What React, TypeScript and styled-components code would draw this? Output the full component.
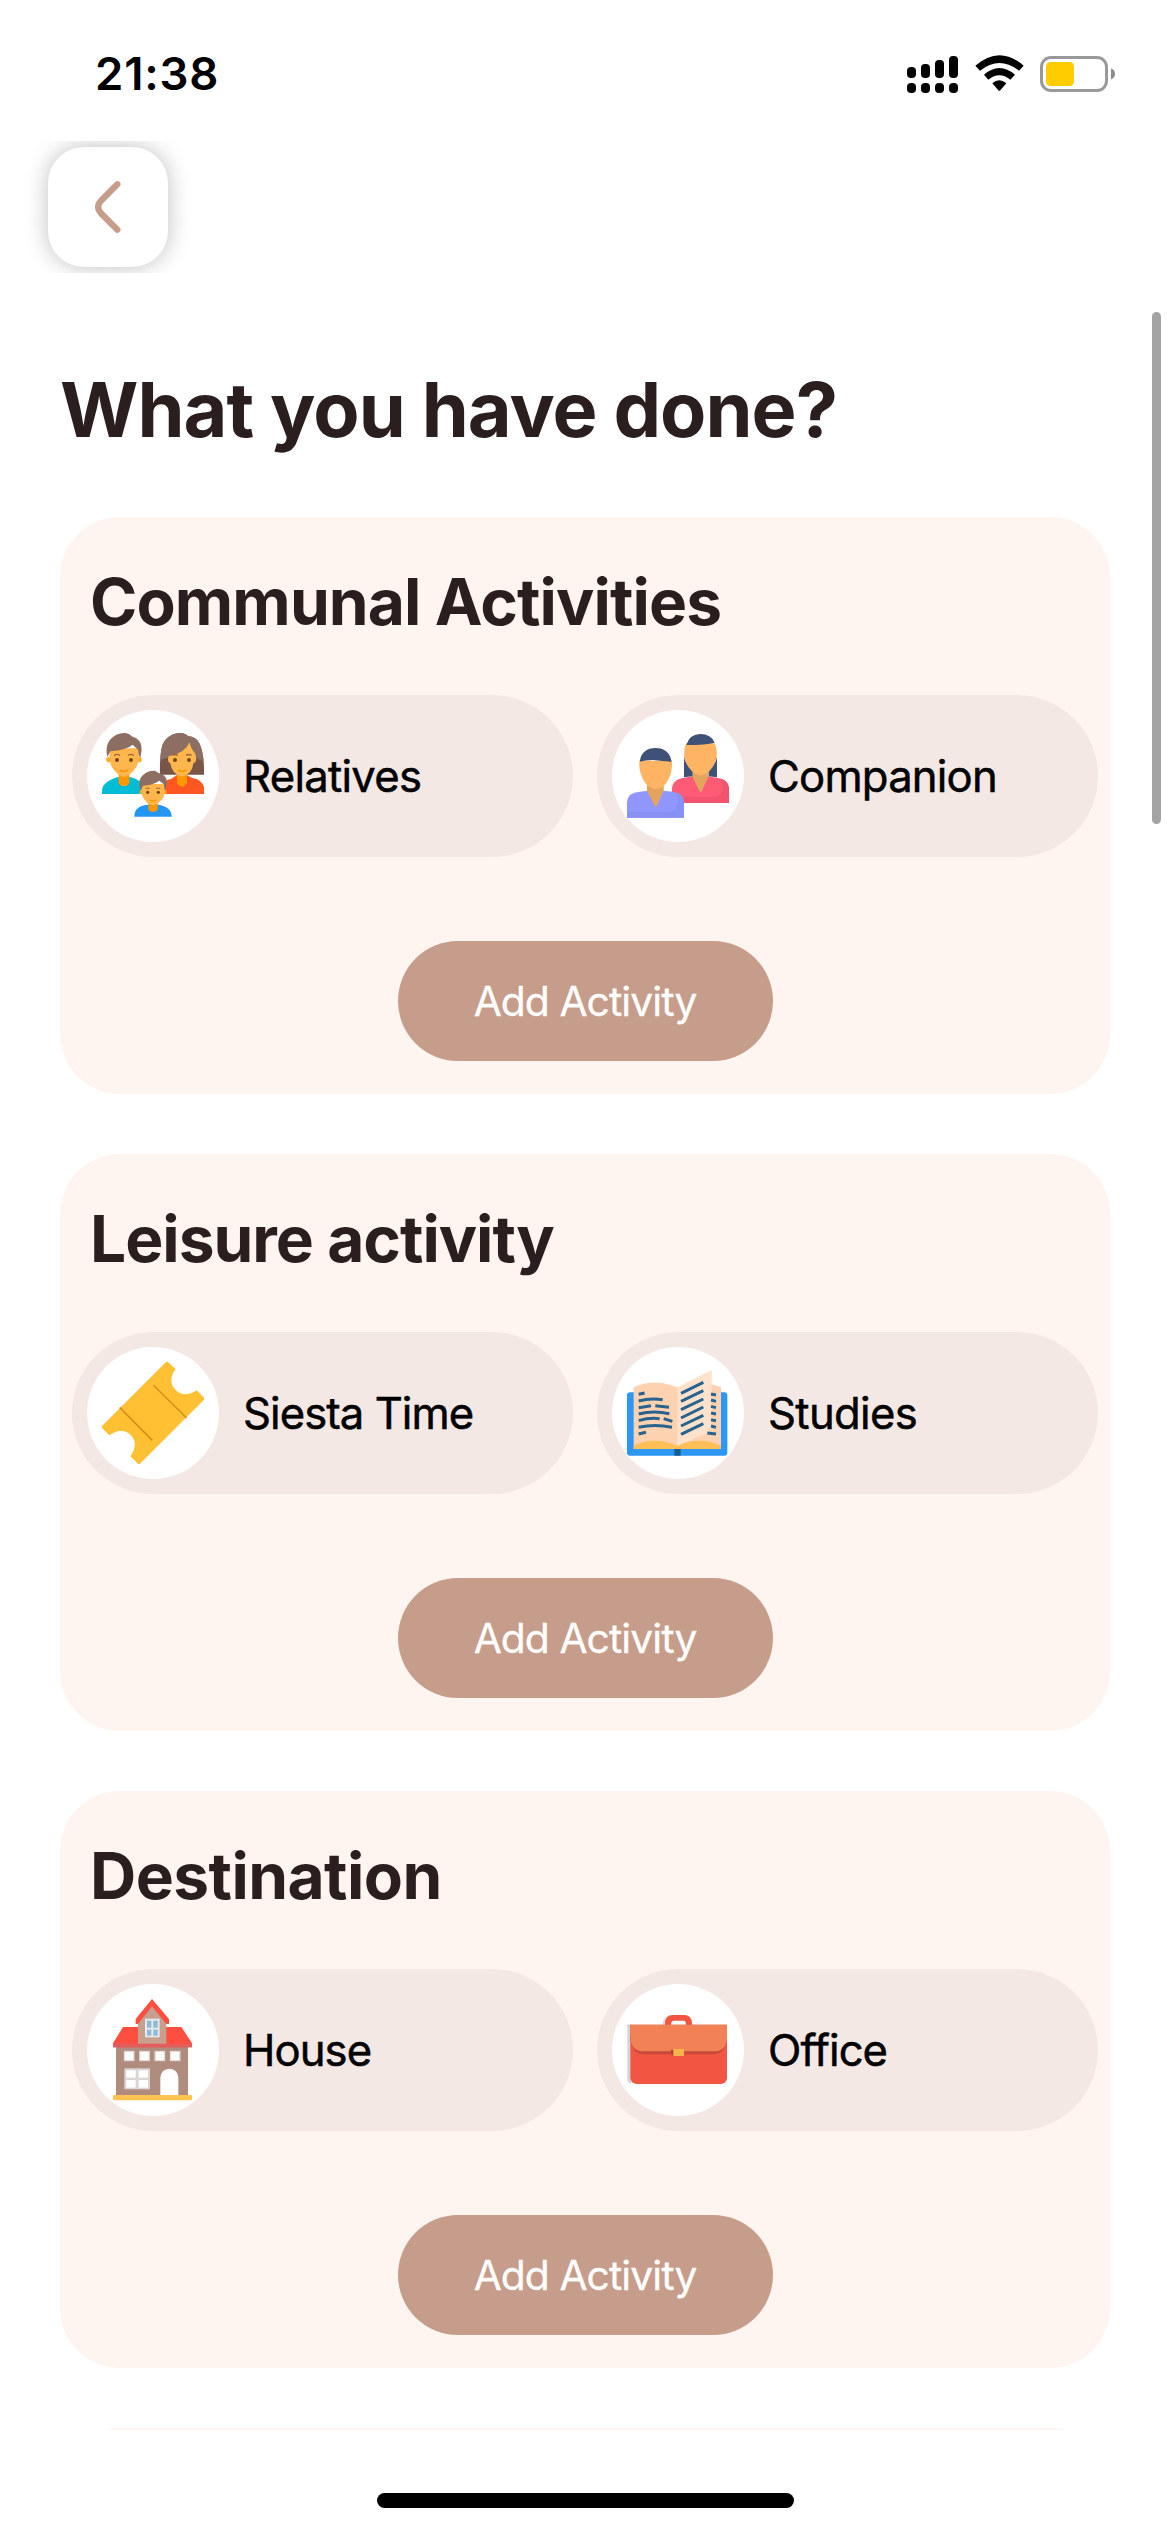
import React from "react";
import styled, { createGlobalStyle } from "styled-components";

const GlobalStyle = createGlobalStyle`
  *, *::before, *::after { box-sizing: border-box; }
  html, body { margin: 0; background: #fff; }
  body { font-family: Inter, "Liberation Sans", sans-serif; -webkit-font-smoothing: antialiased; }
  h1, h2 { margin: 0; }
  button { border: 0; padding: 0; font: inherit; }
`;

const Screen = styled.div`
  position: relative;
  display: flex;
  flex-direction: column;
  width: 1170px;
  height: 2532px;
  overflow: hidden;
  background: #fff;
`;

const StatusBar = styled.header`
  display: flex;
  align-items: center;
  justify-content: space-between;
  height: 141px;
  padding: 7px 54px 0 95px;
`;

const Clock = styled.time`
  color: #000;
  font-size: 45.5px;
  font-weight: 600;
  line-height: 56px;
  letter-spacing: 0.8px;
`;

const StatusIcons = styled.div`
  display: flex;
  align-items: center;
  gap: 16px;
`;

const NavBar = styled.nav`
  height: 132px;
  padding: 6px 48px;
  overflow: hidden;
`;

const BackButton = styled.button`
  display: flex;
  align-items: center;
  justify-content: center;
  width: 120px;
  height: 120px;
  border-radius: 36px;
  background: #fff;
  box-shadow: 0 0 23px rgba(0, 0, 0, 0.25);
`;

const Scroller = styled.main`
  height: 2157px;
  padding: 90px 60px 0;
  overflow: hidden;
`;

const PageTitle = styled.h1`
  margin-bottom: 61px;
  color: #2a1f1e;
  font-size: 75.6px;
  font-weight: 700;
  line-height: 93px;
  letter-spacing: -0.97px;
  white-space: nowrap;
`;

const CardList = styled.div`
  display: flex;
  flex-direction: column;
  gap: 60px;
`;

const Card = styled.section`
  display: flex;
  flex-direction: column;
  align-items: center;
  flex: none;
  height: 577px;
  padding: 46px 12px 33px;
  border-radius: 60px;
  background: #fff5f0;
`;

const CardTitle = styled.h2<{ $track: number }>`
  align-self: stretch;
  padding-left: 18px;
  color: #2a1f1e;
  font-size: 64px;
  font-weight: 700;
  line-height: 78px;
  letter-spacing: ${(p) => p.$track}px;
  white-space: nowrap;
`;

const Options = styled.div`
  display: grid;
  grid-template-columns: 1fr 1fr;
  gap: 24px;
  align-self: stretch;
  margin: 54px 0 84px;
`;

const Option = styled.div`
  display: flex;
  align-items: center;
  gap: 24px;
  height: 162px;
  padding: 15px;
  border-radius: 81px;
  background: #f3e8e4;
`;

const IconDisc = styled.div`
  flex: none;
  width: 132px;
  height: 132px;
  padding: 15px;
  border-radius: 50%;
  background: #fff;

  svg {
    display: block;
    width: 102px;
    height: 102px;
  }
`;

const OptionLabel = styled.span<{ $track: number }>`
  color: #000;
  font-size: 43.6px;
  font-weight: 400;
  letter-spacing: ${(p) => p.$track}px;
  white-space: nowrap;
  -webkit-text-stroke: 0.5px currentColor;
`;

const AddButton = styled.button`
  width: 375px;
  height: 120px;
  border-radius: 60px;
  background: #c69c8a;
  color: #fff;
  font-size: 40.8px;
  letter-spacing: -0.95px;
  -webkit-text-stroke: 0.3px currentColor;
`;

const ScrollThumb = styled.div`
  position: absolute;
  top: 312px;
  right: 9px;
  width: 9px;
  height: 512px;
  border-radius: 5px;
  background: #a4a4a4;
`;

const HomeArea = styled.footer`
  display: flex;
  justify-content: center;
  padding-top: 63px;
`;

const HomeIndicator = styled.div`
  width: 417px;
  height: 15px;
  border-radius: 8px;
  background: #000;
`;

const SignalIcon = () => (
  <svg width="52" height="38" viewBox="0 -1 52 38">
    {[11, 8, 4, 0].map((y, i) => (
      <g key={y}>
        <rect x={i * 14} y={y} width="9" height={22 - y} rx="4" />
        <rect x={i * 14} y="27" width="9" height="10" rx="4" />
      </g>
    ))}
  </svg>
);

const WifiIcon = () => (
  <svg width="49" height="38" viewBox="344 105 147 114">
    <path d="M345 137 Q417 74 490 137 L476 152 Q417 106 359 152 Z" />
    <path d="M371 164 Q417 124 464 164 L450 179 Q417 153 384 179 Z" />
    <path d="M396 190 Q417 172 438 190 L420 211 Q417 214 414 211 Z" />
  </svg>
);

const BatteryIcon = () => (
  <svg width="76" height="36" viewBox="0 0 76 36">
    <rect x="1.5" y="1.5" width="65" height="33" rx="9.5" fill="none" stroke="#999" strokeWidth="3" />
    <rect x="6" y="6" width="28" height="24" rx="4.5" fill="#fc0" />
    <path d="M71 12.6 Q75 14 75 18 Q75 22 71 23.4 Z" fill="#8c8c8c" />
  </svg>
);

const BackIcon = () => (
  <svg width="120" height="120" viewBox="144 441 360 360">
    <path d="M352 553 L303 602 Q286 621 303 640 L352 689" fill="none" stroke="#c69c8a" strokeWidth="19" strokeLinecap="round" />
  </svg>
);

const FamilyIcon = () => (
  <svg viewBox="126 135 306 306">
    <path d="M300 284 Q298 205 313 184 Q334 157 366 159 Q378 161 385 169 Q408 170 418 190 Q433 219 432 284 Z" fill="#795548" />
    <path d="M302 240 Q300 158 366 159 Q378 161 385 169 Q408 170 418 190 Q428 212 431 245 L405 232 L326 232 Z" fill="#8d6e63" />
    <path d="M300 342 Q303 301 333 297 L350 286 L381 286 L397 294 Q425 298 432 322 V342 Z" fill="#ff5722" />
    <path d="M351 276 H381 V310 Q366 330 351 310 Z" fill="#ff9800" />
    <path d="M326 229 Q375 220 389 187 Q392 206 405 220 Q414 246 400 250 Q397 283 366 290 Q336 284 331 250 Q320 246 326 229 Z" fill="#ffb74d" />
    <path d="M126 342 V329 Q130 303 174 291 H211 Q244 300 258 324 V342 Z" fill="#00bcd4" />
    <path d="M176 276 H208 V311 Q192 327 176 311 Z" fill="#ff9800" />
    <circle cx="147" cy="239" r="8" fill="#ffa726" />
    <circle cx="237" cy="239" r="8" fill="#ffa726" />
    <path d="M149 205 H236 Q240 252 224 268 Q208 289 192 291 Q175 288 160 268 Q145 250 149 205 Z" fill="#ffb74d" />
    <path d="M142 231 Q135 200 149 181 Q168 157 197 159 Q210 162 215 169 Q247 177 245 211 L241 234 Q235 225 234 209 L218 194 Q201 210 151 214 Z" fill="#8d6e63" />
    <g fill="none" stroke="#a1653d" strokeWidth="4">
      <path d="M162 227 Q170 220 180 226 M204 226 Q213 220 222 227 M337 226 Q345 221 354 226 M378 226 Q386 221 395 226" />
    </g>
    <g fill="#784719">
      <circle cx="171" cy="240" r="6" /><circle cx="213" cy="240" r="6" />
      <circle cx="345" cy="240" r="6" /><circle cx="387" cy="240" r="6" />
    </g>
    <path d="M179 270 Q192 279 204 270 M354 270 Q366 279 378 270" fill="none" stroke="#ff9800" strokeWidth="5" />
    <path d="M223 410 Q222 378 263 374 H296 Q335 381 335 410 Z" fill="#2196f3" />
    <path d="M265 360 H293 V389 Q279 403 265 389 Z" fill="#ff9800" />
    <circle cx="244" cy="336" r="6" fill="#ffa726" />
    <circle cx="314" cy="336" r="6" fill="#ffa726" />
    <path d="M246 312 H312 Q318 348 304 360 Q291 375 279 376 Q265 374 254 360 Q241 346 246 312 Z" fill="#ffb74d" />
    <path d="M241 332 Q234 312 241 295 Q256 271 282 272 Q291 274 294 278 Q322 284 321 308 L317 331 Q313 325 311 312 L298 302 Q279 315 249 317 Z" fill="#8d6e63" />
    <path d="M256 326 Q262 322 269 326 M288 326 Q294 322 301 326" fill="none" stroke="#a1653d" strokeWidth="3" />
    <circle cx="263" cy="337" r="5" fill="#784719" />
    <circle cx="295" cy="337" r="5" fill="#784719" />
    <path d="M269 359 Q279 367 289 359" fill="none" stroke="#ff9800" strokeWidth="4" />
  </svg>
);

const CoupleIcon = () => (
  <svg viewBox="111 135 306 306">
    <path d="M246 369 V327 Q247 297 284 293 L309 289 H353 L384 294 Q417 298 417 326 V369 Z" fill="#ff5a76" />
    <path d="M398 299 Q417 307 417 328 V369 H260 V350 H374 Q398 348 398 325 Z" fill="#f3536f" />
    <path d="M308 265 H355 V291 L336 332 Q332 340 328 332 L308 291 Z" fill="#e5a45c" />
    <path d="M288 190 H374 Q382 208 380 229 Q371 284 332 286 Q292 284 282 227 Q282 205 288 190 Z" fill="#ffb464" />
    <path d="M381 230 V292 L356 289 V276 Q376 256 381 230 Z M282 230 V292 L308 289 V276 Q287 256 282 230 Z" fill="#3f5177" />
    <path d="M289 195 Q299 162 331 162 Q363 162 374 188 Q350 195 289 195 Z" fill="#3f5177" />
    <path d="M111 413 V366 Q114 337 149 335 L175 332 H221 L248 335 Q282 340 282 370 V413 Z" fill="#8f97ff" />
    <path d="M264 340 Q282 347 282 370 V413 H111 V395 H235 Q264 393 264 365 Z" fill="#8790f3" />
    <path d="M171 312 H221 V332 L201 376 Q197 385 193 376 L171 332 Z" fill="#e5a45c" />
    <path d="M149 242 H245 Q249 270 237 294 Q223 327 197 327 Q171 325 157 294 Q144 265 149 242 Z" fill="#ffb464" />
    <path d="M149 245 Q155 204 197 204 Q237 204 245 245 Q218 244 189 240 Q166 241 149 245 Z" fill="#3f5177" />
  </svg>
);

const TicketIcon = () => (
  <svg viewBox="126 126 306 306">
    <path d="M321 123 L347 148 Q328 171 337 196 Q346 217 371 223 Q393 224 410 211 L435 236 L237 434 L211 409 Q229 384 223 362 Q214 337 187 332 Q166 332 148 346 L123 321 Z" fill="#ffc033" />
    <path d="M280 195 L380 294 M179 262 L277 361" stroke="#d2931c" strokeWidth="5" />
  </svg>
);

const BookIcon = () => (
  <svg viewBox="111 126 306 306">
    <rect x="111" y="217" width="301" height="190" rx="9" fill="#2c97f5" />
    <path d="M131 202 Q191 173 262 202 Q330 174 393 202 V387 H131 Z" fill="#fdd2b1" />
    <path d="M131 377 Q191 348 262 377 Q330 348 393 377 V387 H131 Z" fill="#ffbf57" />
    <path d="M262 202 L365 150 V323 Q365 333 354 338 L262 377 Z" fill="#ffe1cc" />
    <rect x="253" y="387" width="19" height="20" fill="#175d91" />
    <g fill="none" stroke="#28628f" strokeWidth="9">
      <path d="M146 223 L164 219 M146 243 Q182 233 218 239 M146 263 L183 257 M196 257 L237 262 M146 282 Q190 271 238 281 M146 302 Q179 292 209 296 M221 296 L247 304 M146 322 Q195 311 246 322 M146 342 L168 337" />
      <path d="M273 220 L340 187 M273 244 L340 212 M273 269 L340 237 M273 294 L340 261 M273 318 L340 286 M273 343 L340 311" />
      <path d="M363 222 L378 225 M363 240 L378 244 M363 259 L378 263 M363 279 L378 282 M363 299 L378 302 M363 318 L378 322 M352 339 L378 342" />
    </g>
  </svg>
);

const HouseIcon = () => (
  <svg viewBox="126 132 306 306">
    <rect x="168" y="270" width="216" height="151" fill="#b08c7e" />
    <path d="M189 216 H364 L396 265 V277 H159 V265 Z" fill="#fc4f40" />
    <path d="M159 266 H396 V277 H159 Z" fill="#e25d5d" />
    <path d="M234 190 L276 147 L319 190 V266 H234 Z" fill="#c69f8e" />
    <path d="M276 132 L327 192 V207 H319 L276 154 L234 207 H227 V192 Z" fill="#fc4f40" />
    <rect x="255" y="191" width="44" height="56" fill="#e6e9eb" />
    <g fill="#8fb9d4">
      <rect x="261" y="197" width="13" height="21" /><rect x="280" y="197" width="13" height="21" />
      <rect x="261" y="224" width="13" height="18" /><rect x="280" y="224" width="13" height="18" />
    </g>
    {[192, 238, 284, 330].map((x) => (
      <rect key={x} x={x + 1.5} y="289.5" width="28" height="27" fill="#fff" stroke="#e4dcd9" strokeWidth="4" />
    ))}
    <rect x="193" y="340" width="77" height="63" fill="#ddd5d3" />
    <g fill="#fff">
      <rect x="199" y="346" width="28" height="22" /><rect x="236" y="346" width="28" height="22" />
      <rect x="199" y="375" width="28" height="23" /><rect x="236" y="375" width="28" height="23" />
    </g>
    <path d="M301 421 V368 Q304 342 328 341 Q353 342 355 368 V421 Z" fill="#fff" />
    <rect x="159" y="420" width="237" height="16" rx="4" fill="#ffc450" />
  </svg>
);

const BriefcaseIcon = () => (
  <svg viewBox="111 132 306 306">
    <path d="M112 208 H124 V386 Q112 384 112 372 Z" fill="#000" opacity="0.17" />
    <path d="M218 209 Q219 184 240 180 H250 V209 Z" fill="#000" opacity="0.15" />
    <path d="M225 210 V203 Q227 182 247 180 H285 Q304 182 306 203 V210 Z" fill="#f25541" />
    <path d="M243 210 Q243 197 252 197 H280 Q288 197 288 210 Z" fill="#fff" />
    <path d="M121 209 H411 V370 Q409 385 394 387 H139 Q123 385 121 370 Z" fill="#f25541" />
    <path d="M121 258 Q132 297 158 298 H374 Q402 296 411 258 V240 H121 Z" fill="#c8493b" />
    <path d="M121 209 H411 V248 Q410 286 375 289 H157 Q123 286 121 248 Z" fill="#f38156" />
    <path d="M243 284 H251 V303 Q243 301 243 284 Z" fill="#a94434" />
    <rect x="250" y="282" width="32" height="21" fill="#f5b44c" />
  </svg>
);

type Item = { label: string; track: number; icon: () => React.JSX.Element };
type Section = { title: string; track: number; items: Item[] };

const sections: Section[] = [
  {
    title: "Communal Activities",
    track: -0.88,
    items: [
      { label: "Relatives", track: -0.72, icon: FamilyIcon },
      { label: "Companion", track: -0.78, icon: CoupleIcon },
    ],
  },
  {
    title: "Leisure activity",
    track: -1,
    items: [
      { label: "Siesta Time", track: -0.93, icon: TicketIcon },
      { label: "Studies", track: -0.65, icon: BookIcon },
    ],
  },
  {
    title: "Destination",
    track: -0.55,
    items: [
      { label: "House", track: -0.9, icon: HouseIcon },
      { label: "Office", track: -0.95, icon: BriefcaseIcon },
    ],
  },
];

export default function App() {
  return (
    <Screen>
      <GlobalStyle />
      <StatusBar>
        <Clock>21:38</Clock>
        <StatusIcons>
          <SignalIcon />
          <WifiIcon />
          <BatteryIcon />
        </StatusIcons>
      </StatusBar>
      <NavBar>
        <BackButton aria-label="Back">
          <BackIcon />
        </BackButton>
      </NavBar>
      <Scroller>
        <PageTitle>What you have done?</PageTitle>
        <CardList>
          {sections.map((section) => (
            <Card key={section.title}>
              <CardTitle $track={section.track}>{section.title}</CardTitle>
              <Options>
                {section.items.map(({ label, track, icon: Icon }) => (
                  <Option key={label}>
                    <IconDisc>
                      <Icon />
                    </IconDisc>
                    <OptionLabel $track={track}>{label}</OptionLabel>
                  </Option>
                ))}
              </Options>
              <AddButton>Add Activity</AddButton>
            </Card>
          ))}
          <Card />
        </CardList>
      </Scroller>
      <HomeArea>
        <HomeIndicator />
      </HomeArea>
      <ScrollThumb />
    </Screen>
  );
}
